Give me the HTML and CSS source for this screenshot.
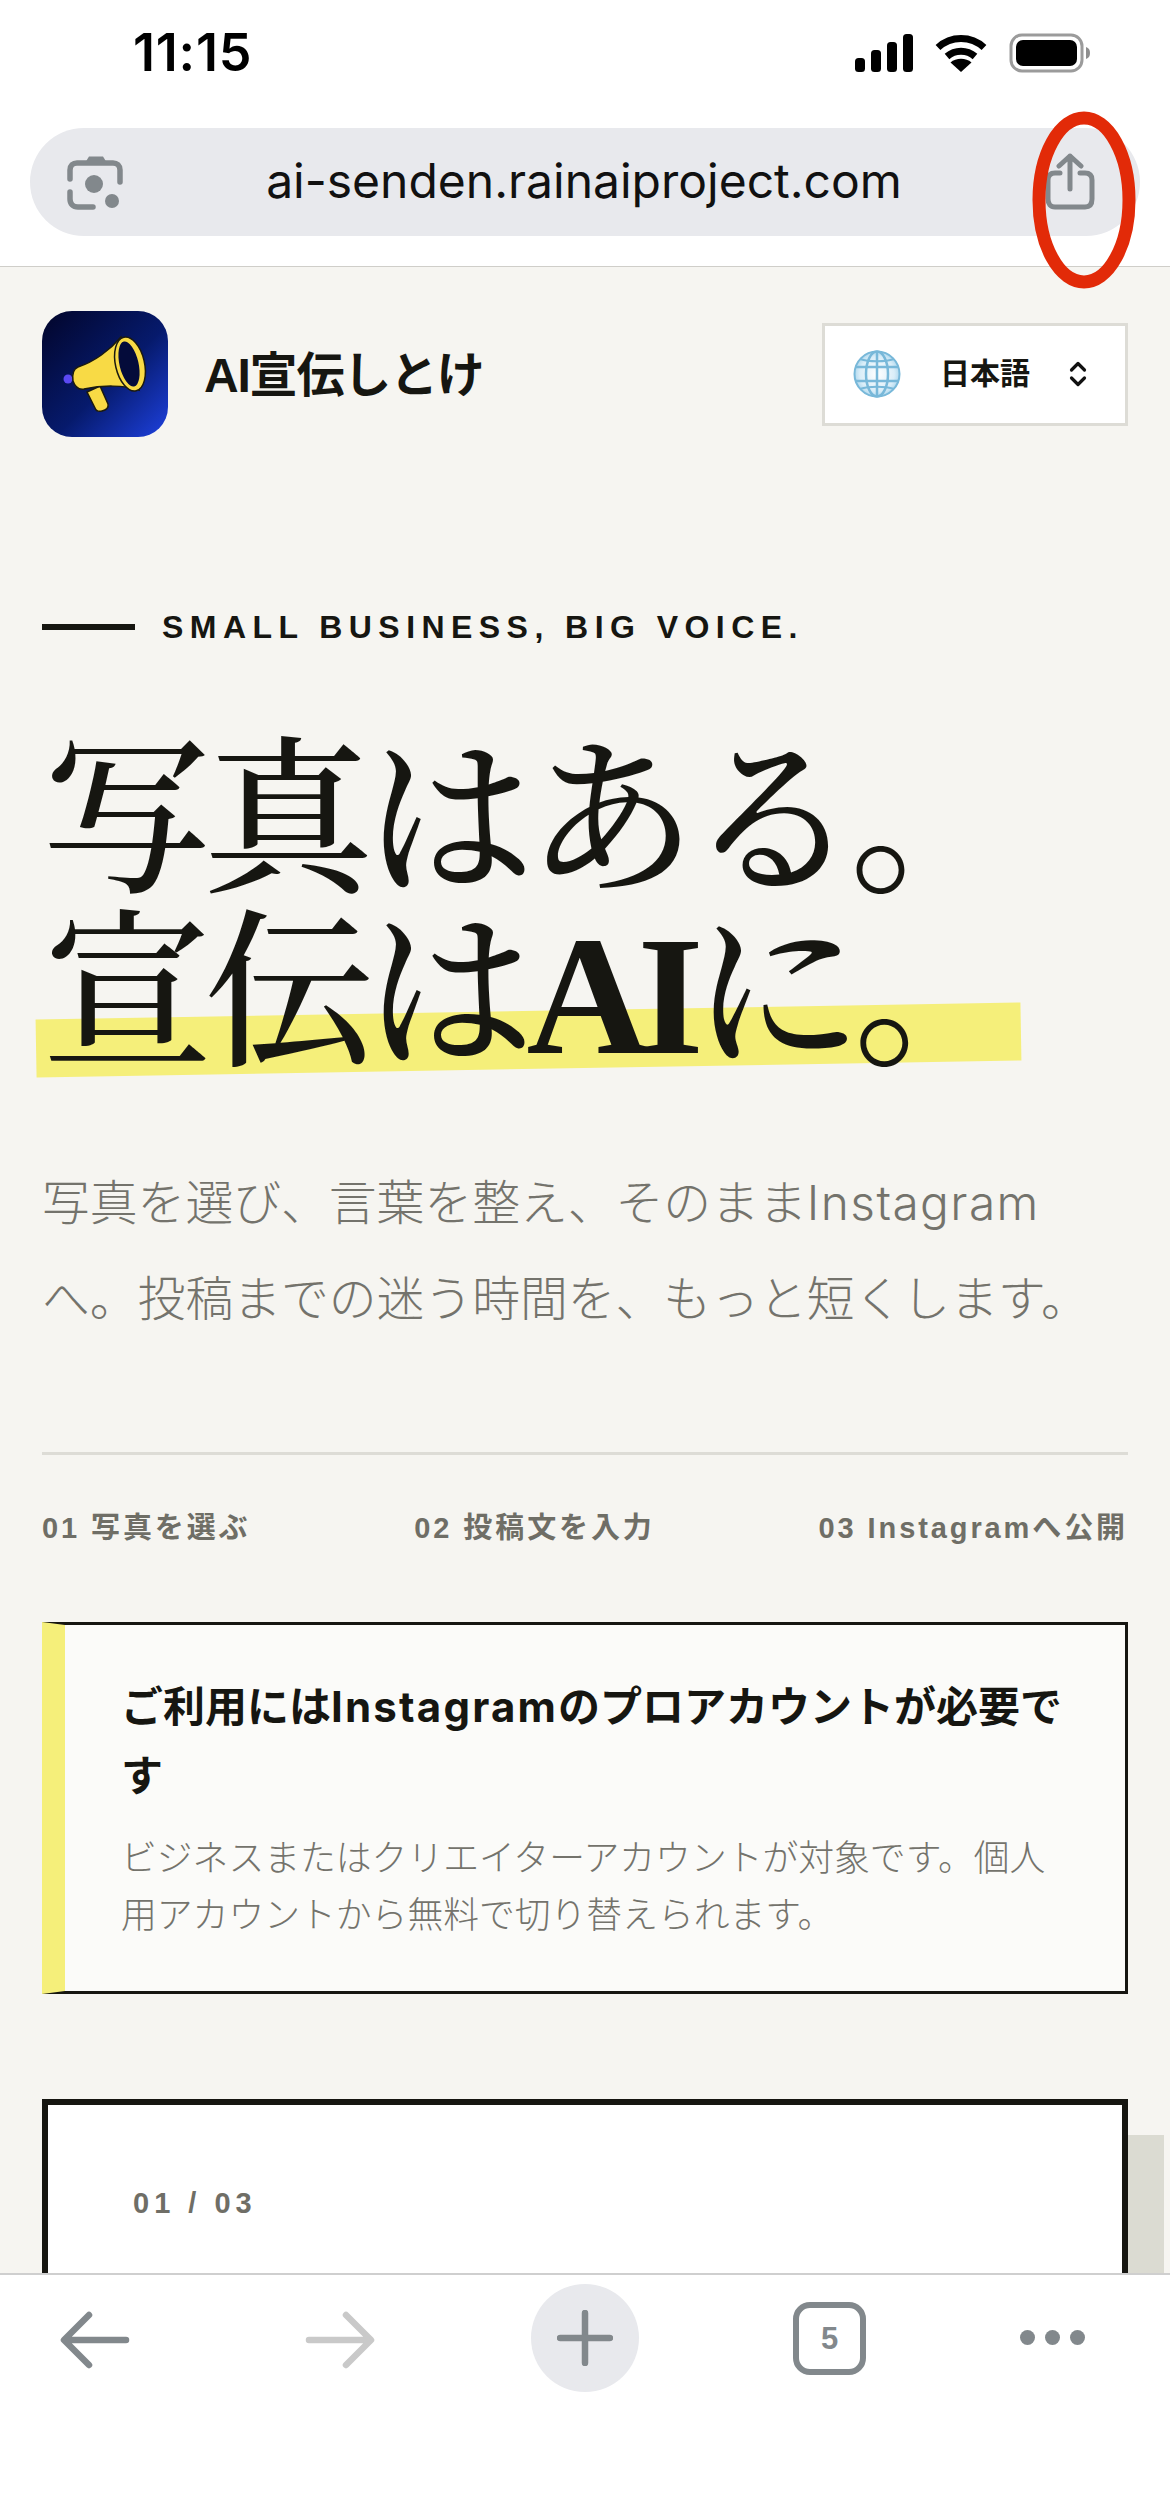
FILE: index.html
```html
<!DOCTYPE html>
<html lang="ja">
<head>
<meta charset="utf-8">
<title>AI宣伝しとけ</title>
<link rel="stylesheet" href="styles.css">
</head>
<body>
<div class="phone">
  <header class="chrome">
    <div class="status">
      <span class="time">11:15</span>
      <div class="status-icons">
        <svg class="ic-signal" width="58" height="38" viewBox="0 0 58 38"><rect x="0" y="24" width="10" height="14" rx="3.5"/><rect x="16" y="16" width="10" height="22" rx="3.5"/><rect x="32" y="8" width="10" height="30" rx="3.5"/><rect x="48" y="0" width="10" height="38" rx="3.5"/></svg>
        <svg class="ic-wifi" width="52" height="38" viewBox="0 0 52 38"><path d="M3 13.5C16 1.5 36 1.500 49 13.500" fill="none" stroke="#000" stroke-width="7"/><path d="M12 22.500C20 15.500 32 15.500 40 22.500" fill="none" stroke="#000" stroke-width="7"/><path d="M26 38L15.500 28.500C21 23.500 31 23.500 36.500 28.500Z"/></svg>
        <svg class="ic-batt" width="82" height="40" viewBox="0 0 82 40"><rect x="2" y="2" width="71" height="36" rx="11" fill="none" stroke="#9b9b9b" stroke-width="3"/><rect x="7" y="7" width="61" height="26" rx="7"/><path d="M77 14C80 15 81 17 81 20S80 25 77 26Z" fill="#8e8e8e"/></svg>
      </div>
    </div>
    <div class="urlbar">
      <svg class="ic-lens" width="56" height="56" viewBox="0 0 56 56" fill="none" stroke="#82888c" stroke-width="5.500" stroke-linecap="round"><path d="M3 25V16C3 11.500 6 9 10 9H46C50 9 53 11.500 53 16V28"/><path d="M3 38V45C3 50 6 53 11 53H26"/><path d="M18 9L22 2.500H36L40 9Z" fill="#82888c" stroke="none"/><circle cx="27" cy="30" r="9" fill="#82888c" stroke="none"/><circle cx="45" cy="47" r="7" fill="#82888c" stroke="none"/></svg>
      <span class="url">ai-senden.rainaiproject.com</span>
      <svg class="ic-share" width="50" height="58" viewBox="0 0 50 58" fill="none" stroke="#82888c" stroke-width="5" stroke-linecap="round" stroke-linejoin="round"><path d="M25 36V3M14 13L25 3L36 13"/><path d="M15 20H10C5.500 20 3 22.500 3 27V46C3 51 5.500 54 10 54H40C45 54 47 51 47 46V27C47 22.500 45 20 40 20H35"/></svg>
    </div>
  </header>

  <main class="page">
    <div class="topbar">
      <div class="brand">
        <svg class="logo" width="126" height="126" viewBox="0 0 126 126">
          <defs>
            <linearGradient id="logoBg" x1="0" y1="0" x2="1" y2="1"><stop offset="0" stop-color="#02052a"/><stop offset=".55" stop-color="#061a6c"/><stop offset="1" stop-color="#1e41df"/></linearGradient>
          </defs>
          <rect width="126" height="126" rx="30" fill="url(#logoBg)"/>
          <circle cx="26" cy="68" r="4.500" fill="#5b49f2"/>
          <path d="M45 81L58 75L66 93C67 97 64 99 60 100C56 101 54 100 53 97Z" fill="#f8da45" stroke="#1b1a10" stroke-width="1.500"/>
          <path d="M36 56C52 51 68 39 79 26L97 79C82 74 60 74 42 78C36 79 33 76 31 70C30 63 31 58 36 56Z" fill="#f8da45" stroke="#1b1a10" stroke-width="1.500"/>
          <ellipse cx="88" cy="53" rx="14.500" ry="27.500" transform="rotate(-13 88 53)" fill="#f8da45" stroke="#1b1a10" stroke-width="1.500"/>
          <ellipse cx="87" cy="53" rx="9.500" ry="23" transform="rotate(-13 87 53)" fill="#040b3a"/>
        </svg>
        <span class="brand-name">AI宣伝しとけ</span>
      </div>
      <div class="lang">
        <svg class="globe" width="48" height="48" viewBox="0 0 48 48" fill="none">
          <defs><radialGradient id="gl" cx=".5" cy=".5" r=".55"><stop offset="0" stop-color="#fff"/><stop offset=".7" stop-color="#d9edf8"/><stop offset="1" stop-color="#9fd0ea"/></radialGradient></defs>
          <circle cx="24" cy="24" r="22.500" fill="url(#gl)" stroke="#78b8d9" stroke-width="2"/>
          <g stroke="#78b8d9" stroke-width="2.500">
            <ellipse cx="24" cy="24" rx="11" ry="22.500"/>
            <path d="M24 1.500V46.500M2.500 17H45.500M2.500 31H45.500"/>
            <path d="M7 9C16 12 32 12 41 9M7 39C16 36 32 36 41 39" stroke-width="2"/>
          </g>
        </svg>
        <span class="lang-name">日本語</span>
        <svg class="chev" width="18" height="26" viewBox="0 0 18 26" fill="none" stroke="#111" stroke-width="3.200" stroke-linecap="round" stroke-linejoin="round"><path d="M2.500 9L9 2.500L15.500 9M2.500 17L9 23.500L15.500 17"/></svg>
      </div>
    </div>

    <div class="eyebrow"><span class="eyebrow-line"></span><span class="eyebrow-text">SMALL BUSINESS, BIG VOICE.</span></div>

    <h1 class="hero">写真はある。<br><span class="hl">宣伝は<span class="hero-latin">AI</span>に。</span></h1>

    <p class="lead">写真を選び、言葉を整え、そのまま<span class="lead-latin">Instagram</span>へ。投稿までの迷う時間を、もっと短くします。</p>

    <ol class="steps">
      <li>01 写真を選ぶ</li>
      <li>02 投稿文を入力</li>
      <li>03 Instagramへ公開</li>
    </ol>

    <aside class="note">
      <h2 class="note-title">ご利用には<span class="note-latin">Instagram</span>のプロアカウントが必要です</h2>
      <p class="note-body">ビジネスまたはクリエイターアカウントが対象です。個人用アカウントから無料で切り替えられます。</p>
    </aside>

    <section class="card">
      <div class="card-count">01 / 03</div>
    </section>
  </main>

  <nav class="toolbar">
    <svg class="tool" width="70" height="58" viewBox="0 0 70 58" fill="none" stroke="#82888c" stroke-width="6.500" stroke-linecap="round" stroke-linejoin="round"><path d="M66 29H5M29 4L4 29L29 54"/></svg>
    <svg class="tool" width="70" height="58" viewBox="0 0 70 58" fill="none" stroke="#c9c9c9" stroke-width="6.500" stroke-linecap="round" stroke-linejoin="round"><path d="M4 29H65M41 4L66 29L41 54"/></svg>
    <div class="plus">
      <svg width="56" height="56" viewBox="0 0 56 56" fill="none" stroke="#82888c" stroke-width="6.500" stroke-linecap="round"><path d="M28 3V53M3 28H53"/></svg>
    </div>
    <div class="tabs">5</div>
    <div class="dots"><i></i><i></i><i></i></div>
  </nav>

  <svg class="mark" width="120" height="190" viewBox="0 0 120 190" fill="none"><ellipse cx="60" cy="95" rx="45" ry="82" stroke="#e22a08" stroke-width="13"/></svg>
</div>
</body>
</html>
```

FILE: styles.css
```css
* { box-sizing: border-box; }
html, body { margin: 0; padding: 0; }
body {
  width: 1170px;
  height: 2507px;
  overflow: hidden;
  font-family: "Liberation Sans", "Noto Sans CJK JP", sans-serif;
  color: #161611;
  background: #fff;
}
.phone {
  position: relative;
  width: 1170px;
  height: 2507px;
  display: flex;
  flex-direction: column;
  overflow: hidden;
}

/* browser chrome */
.chrome {
  height: 267px;
  flex: none;
  background: #fff;
  border-bottom: 1px solid #cfcec9;
  padding: 0 30px;
}
.status {
  height: 128px;
  padding: 0 0 0 103px;
  display: flex;
  justify-content: space-between;
  align-items: flex-start;
}
.time {
  margin-top: 24px;
  font-family: "Inter", "Liberation Sans", sans-serif;
  font-weight: 600;
  font-size: 52px;
  line-height: 58px;
  letter-spacing: 0.800px;
  color: #000;
}
.status-icons {
  margin-top: 33px;
  margin-right: 49px;
  display: flex;
  align-items: center;
  gap: 22px;
}
.urlbar {
  position: relative;
  height: 108px;
  width: 1110px;
  border-radius: 54px;
  background: #e8e9ed;
  display: flex;
  align-items: center;
  justify-content: space-between;
  padding: 0 45px 0 37px;
}
.url {
  margin-bottom: 3px;
  font-family: "Inter", "Liberation Sans", sans-serif;
  font-size: 48px;
  line-height: 58px;
  color: #111;
}

/* page */
.page {
  flex: 1;
  min-height: 0;
  overflow: hidden;
  background: #f6f5f1;
  padding: 44px 42px 0;
}
.topbar {
  display: flex;
  justify-content: space-between;
  align-items: center;
}
.brand { display: flex; align-items: center; gap: 36px; }
.logo { display: block; }
.brand-name {
  margin-top: 3px;
  font-weight: 700;
  font-size: 48px;
  line-height: 60px;
  letter-spacing: -1.200px;
}
.lang {
  width: 306px;
  height: 103px;
  border: 3px solid #dddcd6;
  background: #fff;
  display: flex;
  align-items: center;
  padding: 0 38px 0 28px;
  justify-content: space-between;
}
.lang-name { font-weight: 700; font-size: 30px; line-height: 40px; color: #161611; }

.eyebrow {
  margin-top: 172px;
  display: flex;
  align-items: center;
  gap: 27px;
}
.eyebrow-line { width: 93px; height: 6px; background: #161611; }
.eyebrow-text {
  font-weight: 700;
  font-size: 32px;
  line-height: 36px;
  letter-spacing: 6.450px;
}
.hero {
  margin: 78px 0 0;
  font-family: "Noto Serif CJK JP", "Liberation Serif", "Noto Sans CJK JP", serif;
  font-weight: 500;
  font-size: 170px;
  line-height: 168px;
  letter-spacing: -0.05em;
  white-space: nowrap;
}
.hero-latin {
  font-family: "Liberation Serif", serif;
  font-weight: 700;
  letter-spacing: -0.07em;
}
.hl {
  position: relative;
  z-index: 0;
  display: inline-block;
  margin-top: 5px;
}
.hl::before {
  content: "";
  position: absolute;
  z-index: -1;
  left: -6px;
  width: 985px;
  top: 115px;
  height: 58px;
  background: #f5ef7a;
  transform: rotate(-1deg);
}
.lead {
  margin: 75px 0 0;
  font-family: "Inter", "Noto Sans CJK JP", sans-serif;
  font-weight: 300;
  font-size: 47.800px;
  line-height: 96px;
  color: #74736c;
}
.lead-latin { letter-spacing: 0.030em; }
.steps {
  list-style: none;
  margin: 105px 0 0;
  padding: 54px 0 0;
  border-top: 3px solid #dddcd6;
  display: flex;
  justify-content: space-between;
  font-weight: 700;
  font-size: 29px;
  line-height: 38px;
  letter-spacing: 2.900px;
  color: #6f6e66;
}
.note {
  margin-top: 75px;
  border: 3px solid #161611;
  border-left: 23px solid #f5ef7a;
  background: #fbfbf9;
  padding: 47px 45px 46px 56px;
}
.note-title {
  margin: 0;
  font-family: "Inter", "Noto Sans CJK JP", sans-serif;
  font-weight: 700;
  font-size: 42px;
  line-height: 69px;
  color: #161611;
}
.note-latin { letter-spacing: 2.200px; }
.note-body {
  margin: 21px 0 0;
  font-weight: 300;
  font-size: 35.800px;
  line-height: 57px;
  color: #74736c;
}
.card {
  margin-top: 105px;
  height: 400px;
  border: 6px solid #161611;
  background: #fff;
  box-shadow: 36px 36px 0 #dbdbd2;
  padding: 80px 0 0 85px;
}
.card-count {
  font-weight: 700;
  font-size: 29px;
  line-height: 36px;
  letter-spacing: 5px;
  color: #6f6e66;
}

/* toolbar */
.toolbar {
  height: 234px;
  flex: none;
  background: #fff;
  border-top: 2px solid #cfcfcf;
  padding: 9px 0 0 60px;
  display: flex;
  align-items: flex-start;
  position: relative;
}
.tool { margin-top: 27px; display: block; }
.tool + .tool { margin-left: 175px; }
.plus {
  width: 108px;
  height: 108px;
  margin-left: 156px;
  border-radius: 50%;
  background: #e8e9ed;
  display: flex;
  align-items: center;
  justify-content: center;
}
.tabs {
  width: 73px;
  height: 73px;
  margin: 18px 0 0 154px;
  border: 6px solid #82888c;
  border-radius: 17px;
  display: flex;
  align-items: center;
  justify-content: center;
  font-weight: 700;
  font-size: 31px;
  color: #82888c;
}
.dots {
  margin: 46px 0 0 154px;
  display: flex;
  gap: 10px;
}
.dots i {
  display: block;
  width: 15px;
  height: 15px;
  border-radius: 50%;
  background: #82888c;
}

/* hand-drawn annotation on top of the screenshot */
.mark {
  position: absolute;
  left: 1024px;
  top: 105px;
}
```
